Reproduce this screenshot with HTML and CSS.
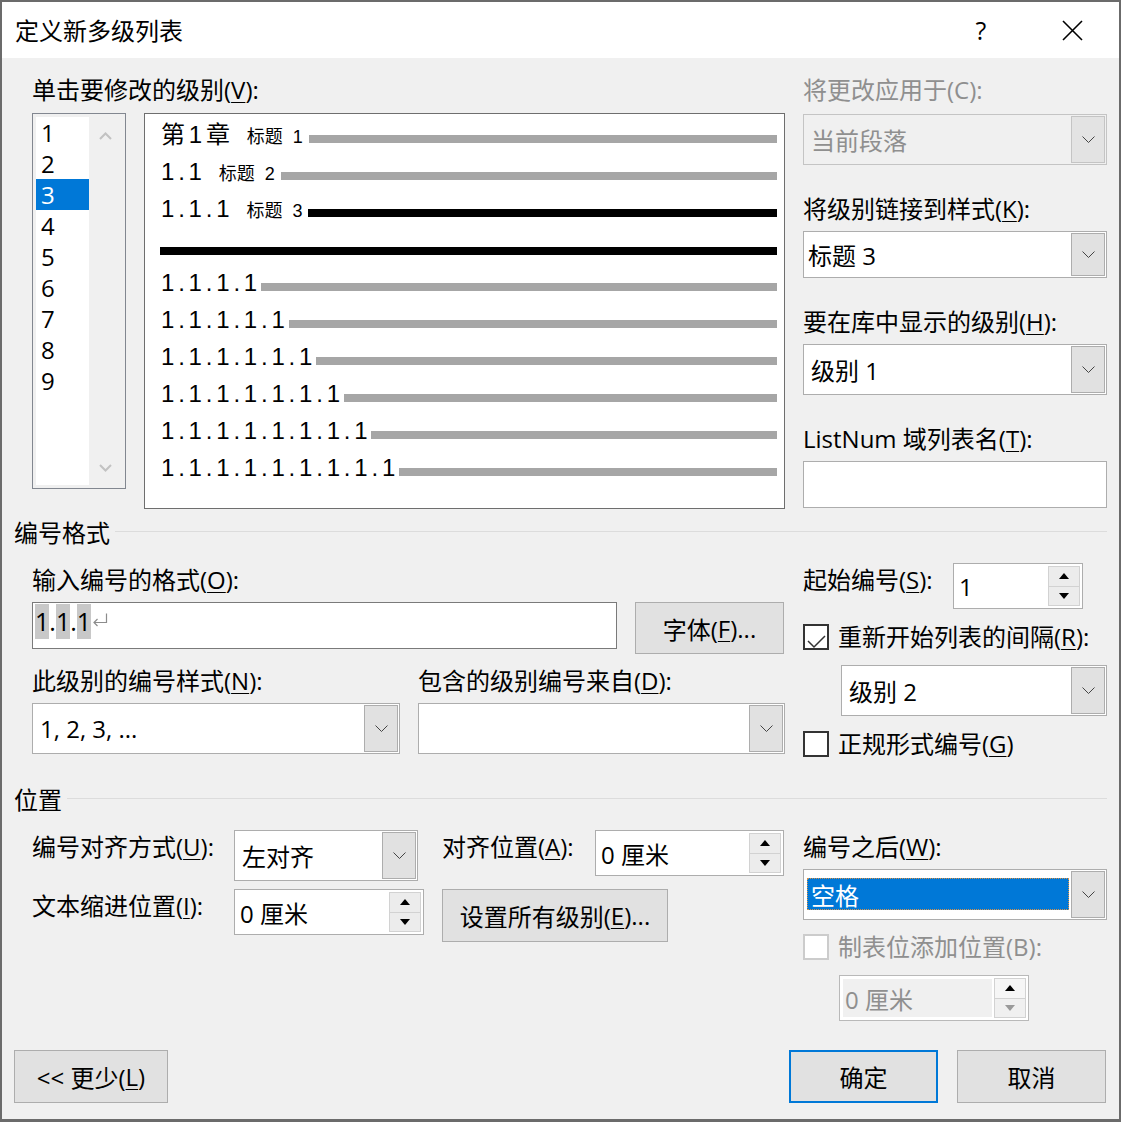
FILE: index.html
```html
<!DOCTYPE html>
<html lang="zh-CN">
<head>
<meta charset="utf-8">
<title>定义新多级列表</title>
<link rel="stylesheet" href="styles.css">
</head>
<body>
<div class="window">
  <div class="titlebar">
    <div class="title">定义新多级列表</div>
    <div class="tb-help">?</div>
    <div class="tb-close"><svg width="21" height="21" viewBox="0 0 21 21"><path d="M1 1L20 20M20 1L1 20" stroke="#000" stroke-width="1.6" fill="none"/></svg></div>
  </div>

  <div class="sec-top">
    <div class="col-left">
      <div class="label">单击要修改的级别(<u>V</u>):</div>
      <div class="level-row">
        <div class="levels">
          <div class="level-items">
            <div class="lv">1</div>
            <div class="lv">2</div>
            <div class="lv sel">3</div>
            <div class="lv">4</div>
            <div class="lv">5</div>
            <div class="lv">6</div>
            <div class="lv">7</div>
            <div class="lv">8</div>
            <div class="lv">9</div>
          </div>
          <div class="level-scroll">
            <svg width="13" height="8" viewBox="0 0 13 8"><path d="M1 7L6.5 1.5L12 7" fill="none" stroke="#c2c2c2" stroke-width="2"/></svg>
            <svg width="13" height="8" viewBox="0 0 13 8"><path d="M1 1L6.5 6.5L12 1" fill="none" stroke="#c2c2c2" stroke-width="2"/></svg>
          </div>
        </div>
        <div class="preview">
          <div class="pv-row"><span class="pn">第1章</span><span class="ph">标题<span class="phn">1</span></span><div class="bar"></div></div>
          <div class="pv-row"><span class="pn">1.1</span><span class="ph">标题<span class="phn">2</span></span><div class="bar"></div></div>
          <div class="pv-row"><span class="pn">1.1.1</span><span class="ph">标题<span class="phn">3</span></span><div class="bar blk"></div></div>
          <div class="pv-gap"><div class="bar blk full"></div></div>
          <div class="pv-row"><span class="pn">1.1.1.1</span><div class="bar tight"></div></div>
          <div class="pv-row"><span class="pn">1.1.1.1.1</span><div class="bar tight"></div></div>
          <div class="pv-row"><span class="pn">1.1.1.1.1.1</span><div class="bar tight"></div></div>
          <div class="pv-row"><span class="pn">1.1.1.1.1.1.1</span><div class="bar tight"></div></div>
          <div class="pv-row"><span class="pn">1.1.1.1.1.1.1.1</span><div class="bar tight"></div></div>
          <div class="pv-row"><span class="pn">1.1.1.1.1.1.1.1.1</span><div class="bar tight"></div></div>
        </div>
      </div>
    </div>

    <div class="col-right">
      <div class="label dis">将更改应用于(C):</div>
      <div class="combo combo-dis first-combo">
        <div class="val">当前段落</div>
        <div class="dd"><svg width="13" height="7" viewBox="0 0 13 7"><path d="M0.5 0.5L6.5 6.5L12.5 0.5" fill="none" stroke="#444" stroke-width="1"/></svg></div>
      </div>
      <div class="label field-gap">将级别链接到样式(<u>K</u>):</div>
      <div class="combo combo-short edit after-label">
        <div class="val">标题 3</div>
        <div class="dd"><svg width="13" height="7" viewBox="0 0 13 7"><path d="M0.5 0.5L6.5 6.5L12.5 0.5" fill="none" stroke="#444" stroke-width="1"/></svg></div>
      </div>
      <div class="label field-gap">要在库中显示的级别(<u>H</u>):</div>
      <div class="combo after-label">
        <div class="val">级别 1</div>
        <div class="dd"><svg width="13" height="7" viewBox="0 0 13 7"><path d="M0.5 0.5L6.5 6.5L12.5 0.5" fill="none" stroke="#444" stroke-width="1"/></svg></div>
      </div>
      <div class="label field-gap">ListNum 域列表名(<u>T</u>):</div>
      <div class="textbox after-label"></div>
    </div>
  </div>

  <div class="group group-fmt">
    <div class="group-title">编号格式</div>
    <div class="group-line"></div>
  </div>

  <div class="sec-mid">
    <div class="mid-left">
      <div class="label top-label">输入编号的格式(<u>O</u>):</div>
      <div class="fmt-row">
        <div class="fmt-input">
          <span class="hl">1</span><span class="dot">.</span><span class="hl">1</span><span class="dot">.</span><span class="hl">1</span><svg class="ret" width="16" height="14" viewBox="0 0 16 14"><path d="M14.5 0.5V9.5H2M5.5 6L2 9.5L5.5 13" fill="none" stroke="#8c8c8c" stroke-width="1.2"/></svg>
        </div>
        <div class="btn btn-font">字体(<u>F</u>)...</div>
      </div>
      <div class="pair-labels">
        <div class="label pair-a">此级别的编号样式(<u>N</u>):</div>
        <div class="label">包含的级别编号来自(<u>D</u>):</div>
      </div>
      <div class="pair-combos">
        <div class="combo combo-style">
          <div class="val">1, 2, 3, ...</div>
          <div class="dd"><svg width="13" height="7" viewBox="0 0 13 7"><path d="M0.5 0.5L6.5 6.5L12.5 0.5" fill="none" stroke="#444" stroke-width="1"/></svg></div>
        </div>
        <div class="combo combo-from">
          <div class="val"></div>
          <div class="dd"><svg width="13" height="7" viewBox="0 0 13 7"><path d="M0.5 0.5L6.5 6.5L12.5 0.5" fill="none" stroke="#444" stroke-width="1"/></svg></div>
        </div>
      </div>
    </div>

    <div class="mid-right">
      <div class="start-row">
        <div class="label start-label">起始编号(<u>S</u>):</div>
        <div class="spin spin-start">
          <div class="val">1</div>
          <div class="sb">
            <div class="sb-up"><svg width="10" height="6" viewBox="0 0 10 6"><path d="M0 6L5 0L10 6Z" fill="#000"/></svg></div>
            <div class="sb-dn"><svg width="10" height="6" viewBox="0 0 10 6"><path d="M0 0L5 6L10 0Z" fill="#000"/></svg></div>
          </div>
        </div>
      </div>
      <div class="check-row restart-row">
        <div class="check"><svg width="22" height="22" viewBox="0 0 22 22"><path d="M3 11L9 17L20 6" fill="none" stroke="#333" stroke-width="1.5"/></svg></div>
        <div class="label">重新开始列表的间隔(<u>R</u>):</div>
      </div>
      <div class="combo combo-restart">
        <div class="val">级别 2</div>
        <div class="dd"><svg width="13" height="7" viewBox="0 0 13 7"><path d="M0.5 0.5L6.5 6.5L12.5 0.5" fill="none" stroke="#444" stroke-width="1"/></svg></div>
      </div>
      <div class="check-row legal-row">
        <div class="check"></div>
        <div class="label">正规形式编号(<u>G</u>)</div>
      </div>
    </div>
  </div>

  <div class="group group-pos">
    <div class="group-title">位置</div>
    <div class="group-line"></div>
  </div>

  <div class="sec-pos">
    <div class="pos-left">
      <div class="pos-row1">
        <div class="label pos-label">编号对齐方式(<u>U</u>):</div>
        <div class="combo combo-align">
          <div class="val">左对齐</div>
          <div class="dd"><svg width="13" height="7" viewBox="0 0 13 7"><path d="M0.5 0.5L6.5 6.5L12.5 0.5" fill="none" stroke="#444" stroke-width="1"/></svg></div>
        </div>
        <div class="label pos-label2">对齐位置(<u>A</u>):</div>
        <div class="spin spin-at">
          <div class="val">0 厘米</div>
          <div class="sb">
            <div class="sb-up"><svg width="10" height="6" viewBox="0 0 10 6"><path d="M0 6L5 0L10 6Z" fill="#000"/></svg></div>
            <div class="sb-dn"><svg width="10" height="6" viewBox="0 0 10 6"><path d="M0 0L5 6L10 0Z" fill="#000"/></svg></div>
          </div>
        </div>
      </div>
      <div class="pos-row2">
        <div class="label pos-label">文本缩进位置(<u>I</u>):</div>
        <div class="spin spin-indent">
          <div class="val">0 厘米</div>
          <div class="sb">
            <div class="sb-up"><svg width="10" height="6" viewBox="0 0 10 6"><path d="M0 6L5 0L10 6Z" fill="#000"/></svg></div>
            <div class="sb-dn"><svg width="10" height="6" viewBox="0 0 10 6"><path d="M0 0L5 6L10 0Z" fill="#000"/></svg></div>
          </div>
        </div>
        <div class="btn btn-all">设置所有级别(<u>E</u>)...</div>
      </div>
    </div>

    <div class="pos-right">
      <div class="label top-label">编号之后(<u>W</u>):</div>
      <div class="combo combo-after after-label">
        <div class="val"><span class="sel-val">空格</span></div>
        <div class="dd"><svg width="13" height="7" viewBox="0 0 13 7"><path d="M0.5 0.5L6.5 6.5L12.5 0.5" fill="none" stroke="#444" stroke-width="1"/></svg></div>
      </div>
      <div class="check-row tab-row">
        <div class="check check-dis"></div>
        <div class="label dis">制表位添加位置(B):</div>
      </div>
      <div class="spin spin-dis">
        <div class="val">0 厘米</div>
        <div class="sb">
          <div class="sb-up"><svg width="10" height="6" viewBox="0 0 10 6"><path d="M0 6L5 0L10 6Z" fill="#000"/></svg></div>
          <div class="sb-dn"><svg width="10" height="6" viewBox="0 0 10 6"><path d="M0 0L5 6L10 0Z" fill="#9a9a9a"/></svg></div>
        </div>
      </div>
    </div>
  </div>

  <div class="footer">
    <div class="btn btn-less">&lt;&lt; 更少(<u>L</u>)</div>
    <div class="btn btn-ok">确定</div>
    <div class="btn btn-cancel">取消</div>
  </div>
</div>
</body>
</html>
```

FILE: styles.css
```css
* { box-sizing: border-box; }
html, body { margin: 0; padding: 0; }
body {
  width: 1121px;
  height: 1122px;
  overflow: hidden;
  font-family: "Open Sans", "Noto Sans CJK SC", sans-serif;
  font-size: 24px;
  color: #000;
  background: #6b6b6b;
}
u { text-decoration-thickness: 1px; text-underline-offset: 3px; }

.window {
  width: 1121px;
  height: 1122px;
  border: 2px solid #6b6b6b;
  border-bottom-width: 3px;
  background: #f0f0f0;
  display: flex;
  flex-direction: column;
}

/* title bar */
.titlebar {
  flex: none;
  height: 56px;
  background: #fff;
  display: flex;
  align-items: center;
}
.title { flex: 1; padding-left: 13px; line-height: 34px; padding-top: 2px; }
.tb-help { width: 40px; margin-right: 24px; text-align: center; line-height: 34px; font-size: 25px; }
.tb-close { width: 94px; display: flex; justify-content: center; align-items: center; }

.label { height: 34px; line-height: 34px; white-space: nowrap; }
.dis { color: #8f8f8f; }

/* top section */
.sec-top { display: flex; padding-left: 30px; margin-top: 15px; flex: none; }
.col-left { width: 753px; }
.col-right { width: 304px; margin-left: 18px; display: flex; flex-direction: column; }
.level-row { display: flex; margin-top: 6px; }

.levels {
  width: 94px;
  height: 376px;
  border: 1px solid #828790;
  background: #f0f0f0;
  padding: 3px;
  display: flex;
}
.level-items { width: 53px; background: #fff; }
.lv { height: 31px; line-height: 31px; padding-left: 5px; }
.lv.sel { background: #0078d7; color: #fff; }
.level-scroll {
  flex: 1;
  display: flex;
  flex-direction: column;
  justify-content: space-between;
  align-items: center;
  padding: 15px 0 13px;
}

.preview {
  width: 641px;
  height: 396px;
  margin-left: 18px;
  border: 1px solid #6e6e6e;
  background: #fff;
  padding: 2px 7px 0 16px;
}
.pv-row {
  display: flex;
  align-items: baseline;
  height: 37px;
  line-height: 37px;
  white-space: nowrap;
  font-family: "Liberation Sans", "Noto Sans CJK SC", sans-serif;
}
.pv-gap { display: flex; align-items: flex-end; height: 37px; padding-bottom: 9px; }
.pn { font-size: 24px; letter-spacing: 3.8px; }
.ph { font-size: 18px; margin-left: 13px; }
.phn { margin-left: 10px; }
.bar { flex: 1; height: 8px; margin-left: 6px; background: #a6a6a6; }
.bar.blk { background: #000; }
.bar.tight { margin-left: 0; }
.bar.full { margin-left: -1px; }

/* combos, text boxes */
.combo {
  display: flex;
  height: 51px;
  border: 1px solid #adadad;
  background: #fff;
}
.combo .val { flex: 1; display: flex; align-items: center; padding-left: 7px; white-space: nowrap; }
.combo .dd {
  width: 34px;
  margin: 1px;
  background: #e1e1e1;
  border: 1px solid #adadad;
  display: flex;
  align-items: center;
  justify-content: center;
}
.combo-dis { background: #f0f0f0; border-color: #c4c4c4; color: #8f8f8f; }
.combo-dis .dd { border-color: #c4c4c4; background: #e3e3e3; }
.combo-short { height: 47px; }
.edit .val { padding-left: 4px; }
.first-combo { margin-top: 7px; }
.field-gap { margin-top: 27px; }
.after-label { margin-top: 5px; }
.textbox { height: 47px; border: 1px solid #adadad; background: #fff; }

/* group headings */
.group { display: flex; align-items: flex-start; height: 34px; padding: 0 12px; flex: none; }
.group-title { line-height: 34px; }
.group-line { flex: 1; height: 1px; background: #dcdcdc; margin: 15px 0 0 5px; }
.group-fmt { margin-top: 7px; }
.group-pos { margin-top: 26px; }

/* middle section */
.sec-mid { display: flex; padding-left: 30px; flex: none; }
.mid-left { width: 753px; }
.mid-right { width: 304px; margin-left: 18px; }
.top-label { margin-top: 13px; }
.fmt-row { display: flex; align-items: flex-start; margin-top: 5px; }
.fmt-input {
  width: 585px;
  height: 47px;
  border: 1px solid #7a7a7a;
  background: #fff;
  padding: 1px 2px;
  display: flex;
  align-items: flex-start;
  font-size: 25px;
}
.hl { background: #c8c8c8; height: 35px; line-height: 35px; }
.dot { height: 35px; line-height: 35px; }
.ret { margin-top: 9px; margin-left: 1px; }

.btn {
  height: 53px;
  border: 1px solid #adadad;
  background: #e1e1e1;
  display: flex;
  align-items: center;
  justify-content: center;
  white-space: nowrap;
}
.btn-font { width: 149px; height: 52px; margin-left: 18px; }
.pair-labels { display: flex; margin-top: 10px; }
.pair-a { width: 386px; }
.pair-combos { display: flex; margin-top: 5px; }
.combo-style { width: 368px; }
.combo-from { width: 367px; margin-left: 18px; }

.start-row { display: flex; align-items: flex-start; margin-top: 13px; }
.start-label { width: 150px; }
.spin {
  display: flex;
  height: 46px;
  border: 1px solid #adadad;
  background: #fff;
}
.spin .val { flex: 1; display: flex; align-items: center; padding-left: 5px; white-space: nowrap; }
.sb { width: 32px; margin: 2px; display: flex; flex-direction: column; }
.sb-up, .sb-dn {
  flex: 1;
  background: #ececec;
  border: 1px solid #d2d2d2;
  display: flex;
  align-items: center;
  justify-content: center;
}
.sb-dn { border-top: none; }
.spin-start { width: 130px; }

.check-row { display: flex; align-items: center; gap: 9px; height: 26px; }
.check {
  width: 26px;
  height: 26px;
  border: 2px solid #333;
  background: #fff;
  flex: none;
}
.check-dis { border-color: #cccccc; }
.restart-row { margin-top: 15px; }
.combo-restart { width: 266px; margin-left: 38px; margin-top: 15px; }
.combo-restart .val { padding-left: 7px; }
.legal-row { margin-top: 15px; }

/* position section */
.sec-pos { display: flex; padding-left: 30px; flex: none; }
.pos-left { width: 753px; }
.pos-right { width: 304px; margin-left: 18px; }
.pos-row1 { display: flex; align-items: flex-start; margin-top: 13px; }
.pos-row2 { display: flex; align-items: flex-start; margin-top: 8px; }
.pos-label { width: 202px; }
.combo-align { width: 184px; }
.pos-label2 { width: 153px; margin-left: 24px; }
.spin-at { width: 189px; }
.spin-indent { width: 190px; }
.btn-all { width: 226px; margin-left: 18px; }

.combo-after .val { padding: 8px 1px 9px 3px; align-items: stretch; }
.sel-val {
  flex: 1;
  background: #0078d7;
  color: #fff;
  border: 1px dotted #d6924a;
  display: flex;
  align-items: center;
  padding-left: 3px;
}
.tab-row { margin-top: 14px; }
.spin-dis { width: 190px; margin-left: 36px; margin-top: 15px; border-color: #b9b9b9; color: #8f8f8f; }
.spin-dis .val { background: #f0f0f0; margin: 3px 0 3px 3px; padding-left: 2px; }
.spin-dis .sb-up { background: #f6f6f6; }
.spin-dis .sb-dn { background: #f0f0f0; }

/* footer */
.footer { display: flex; padding: 0 13px 0 12px; margin-top: 29px; flex: none; }
.btn-less { width: 154px; }
.btn-ok { width: 149px; margin-left: auto; border: 2px solid #0078d7; }
.btn-cancel { width: 149px; margin-left: 19px; }
```
